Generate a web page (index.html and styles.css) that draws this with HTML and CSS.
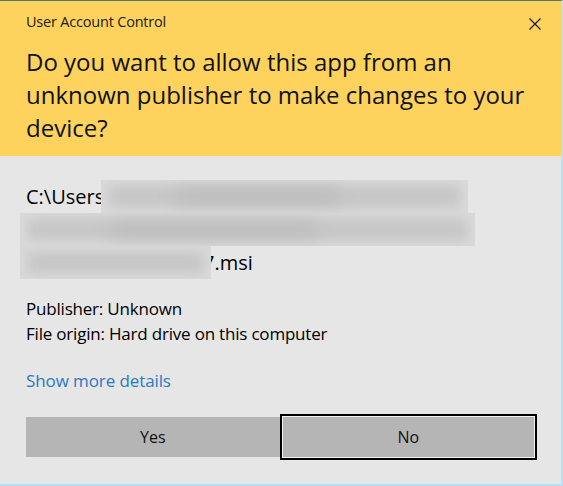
FILE: index.html
```html
<!DOCTYPE html>
<html>
<head>
<meta charset="utf-8">
<link rel="stylesheet" href="styles.css">
</head>
<body>
<div class="dialog">
  <header class="head">
    <div class="titlebar">
      <span class="title">User Account Control</span>
      <svg class="close" width="12" height="12" viewBox="0 0 12 12"><path d="M0.5 0.5 L11.5 11.5 M11.5 0.5 L0.5 11.5" stroke="#1a1a1a" stroke-width="1.2" fill="none"/></svg>
    </div>
    <h1 class="question">Do you want to allow this app from an unknown publisher to make changes to your device?</h1>
  </header>
  <main class="body">
    <div class="path">
      <div class="line">C:\User<span class="s">s</span><span class="blur b1"><i></i><i class="d"></i></span></div>
      <div class="line"><span class="blur b2"><i></i><i class="d"></i></span></div>
      <div class="line"><span class="blur b3"><i></i></span><span class="ext">7.msi</span></div>
    </div>
    <div class="info">
      <div>Publisher: Unknown</div>
      <div>File origin: Hard drive on this computer</div>
    </div>
    <a class="more">Show more details</a>
    <div class="buttons">
      <button class="btn yes">Yes</button>
      <button class="btn no">No</button>
    </div>
  </main>
</div>
</body>
</html>
```
FILE: styles.css
```css
* { box-sizing: border-box; }
html, body { margin: 0; padding: 0; }
body {
  width: 563px;
  height: 486px;
  overflow: hidden;
  font-family: "Open Sans", "Noto Sans", sans-serif;
  color: #000;
}
.dialog {
  width: 563px;
  height: 486px;
  border-top: 1px solid #4c7a70;
  border-right: 2px solid #b3e1f6;
  border-bottom: 2px solid #b3e1f6;
  background: #e6e6e6;
  display: flex;
  flex-direction: column;
}
.head {
  background: #fdd35e;
  padding: 0 0 0 26px;
  height: 155px;
}
.titlebar {
  display: flex;
  justify-content: space-between;
  align-items: center;
  height: 40px;
  padding-right: 20px;
}
.title {
  font-size: 14.5px;
  color: #1a1a1a;
  letter-spacing: -0.2px;
}
.close { display: block; margin-top: 6px; }
.question {
  margin: 4px 0 0;
  font-weight: 400;
  font-size: 24px;
  line-height: 33px;
  color: #111;
  width: 500px;
}
.body {
  flex: 1;
  padding: 24px 0 0 26px;
}
.path {
  font-size: 20px;
  line-height: 33px;
}
.line { display: flex; align-items: center; height: 33px; }
.s { position: relative; }
.blur {
  display: block;
  height: 33px;
  background: #d9d9d9;
  overflow: hidden;
  position: relative;
}
.blur i {
  display: block;
  position: absolute;
  left: 8px; right: 8px; top: 6px; bottom: 6px;
  background: #c6c6c6;
  filter: blur(6px);
}
.blur i.d {
  left: 20%; right: 35%; top: 9px; bottom: 9px;
  background: #bdbdbd;
  filter: blur(8px);
}
.b1 { width: 367px; margin-left: -3px; }
.b2 { width: 455px; margin-left: -6px; }
.b3 { width: 191px; margin-left: -6px; margin-right: -8px; z-index: 1; }
.ext { position: relative; }
.info {
  margin-top: 17px;
  font-size: 17px;
  line-height: 25px;
  letter-spacing: -0.2px;
}
.more {
  display: block;
  margin-top: 23px;
  font-size: 17px;
  color: #2b79c2;
  letter-spacing: -0.1px;
}
.buttons {
  display: flex;
  margin-top: 22px;
  width: 511px;
  align-items: center;
}
.btn {
  flex: 1;
  font-family: inherit;
  font-size: 16px;
  color: #111;
  background: #b5b5b5;
  border: none;
  height: 40px;
  padding: 0;
}
.no {
  height: 46px;
  border: 2px solid #000;
  box-shadow: inset 0 0 0 1px #f2f2f2;
}
```
